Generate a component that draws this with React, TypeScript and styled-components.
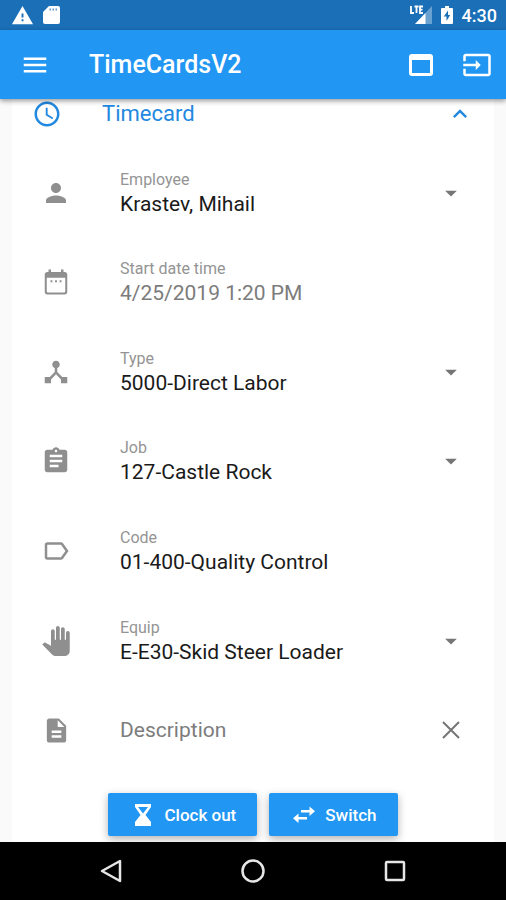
import React, { useId, useState } from "react";
import styled, { createGlobalStyle } from "styled-components";
import {
  MdMenu, MdInput, MdSchedule, MdExpandLess, MdPerson, MdDeviceHub,
  MdAssignment, MdLabelOutline, MdPanTool, MdDescription, MdWarning, MdArrowDropDown,
} from "react-icons/md";

const GlobalStyle = createGlobalStyle`
  *, *::before, *::after { box-sizing: border-box; }
  body {
    margin: 0;
    background: #fafafa;
    font-family: Roboto, "Liberation Sans", sans-serif;
  }
  button, input, select { font: inherit; color: inherit; }
`;

const Screen = styled.div`
  display: flex;
  flex-direction: column;
  min-height: 100vh;
`;

const StatusBar = styled.div`
  display: flex;
  align-items: center;
  justify-content: space-between;
  height: 30px;
  padding: 0 9px 0 11px;
  background: #1a6fb7;
  color: #fff;
  font-size: 18px;
  font-weight: 500;
`;

const StatusGroup = styled.div`
  display: flex;
  align-items: center;
  gap: 9px;
`;

const AppBar = styled.header`
  position: relative;
  z-index: 1;
  display: flex;
  align-items: center;
  height: 69px;
  padding: 0 14px 0 20px;
  background: #2196f3;
  color: #fff;
  box-shadow: 0 2px 5px rgba(0, 0, 0, 0.4);
`;

const IconButton = styled.button`
  display: grid;
  place-items: center;
  padding: 0;
  border: 0;
  background: none;
  color: inherit;
  cursor: pointer;
`;

const Title = styled.h1`
  flex: 1;
  margin: 0 0 0 39px;
  font-size: 25px;
  font-weight: 500;
`;

const BarActions = styled.div`
  display: flex;
  align-items: center;
  gap: 29px;
`;

const Card = styled.main`
  flex: 1;
  display: flex;
  flex-direction: column;
  margin: 0 12px;
  background: #fff;
`;

const SectionHeader = styled.button`
  display: flex;
  align-items: center;
  height: 49px;
  padding: 0 20px 19px;
  border: 0;
  background: none;
  color: #2389e0;
  text-align: left;
  cursor: pointer;
`;

const SectionTitle = styled.span`
  flex: 1;
  margin-left: 40px;
  font-size: 22px;
  line-height: 30px;
`;

const Form = styled.form`
  flex: 1;
  display: flex;
  flex-direction: column;
`;

const Fields = styled.div`
  flex: 1;
  display: grid;
  grid-auto-rows: minmax(64px, 1fr);
`;

const FieldRow = styled.div`
  display: flex;
  align-items: center;
  padding: 0 27px 0 29px;
  color: #8f8f8f;
`;

const LeadingIcon = styled.span`
  display: grid;
  place-items: center;
  flex: none;
  width: 30px;
  margin-right: 49px;
`;

const FieldBody = styled.div`
  flex: 1;
  min-width: 0;
  display: grid;
`;

const FieldLabel = styled.label`
  padding-top: 2px;
  font-size: 16px;
  line-height: 20px;
  color: #949494;
`;

const TextInput = styled.input<{ $muted?: boolean }>`
  width: 100%;
  height: 28px;
  padding: 0;
  border: 0;
  outline: 0;
  background: none;
  font-size: 21px;
  color: ${(p) => (p.$muted ? "#7c7c7c" : "#1a1a1a")};
  &::placeholder { color: #7c7c7c; opacity: 1; }
`;

const SelectInput = styled(TextInput).attrs({ as: "select" })`
  appearance: none;
  cursor: pointer;
`;

const TrailingIcon = styled.span`
  display: grid;
  place-items: center;
  flex: none;
  width: 32px;
  color: #757575;
`;

const Actions = styled.div`
  display: flex;
  justify-content: center;
  gap: 12px;
  padding: 18px 0 6px;
`;

const ActionButton = styled.button`
  display: flex;
  align-items: center;
  gap: 10px;
  height: 43px;
  padding: 0 21px 0 24px;
  border: 0;
  border-radius: 2px;
  background: #2196f3;
  color: #fff;
  font-size: 17px;
  font-weight: 500;
  box-shadow: 0 3px 8px rgba(0, 0, 0, 0.3);
  cursor: pointer;
`;

const NavBar = styled.nav`
  position: relative;
  display: flex;
  align-items: center;
  justify-content: space-around;
  height: 58px;
  padding: 0 40px;
  background: #000;
  color: #e6e6e6;
`;

const SdCardIcon = () => (
  <svg width="17" height="20" viewBox="0 0 17 20" aria-hidden="true">
    <path d="M6 1h9q2 0 2 2v14q0 2-2 2H2q-2 0-2-2V7z" fill="#fff" />
    <path d="M6.500 3.500h1.500v2H6.500zM9.500 3.500H11v2H9.500zM12.500 3.500H14v2h-1.500z" fill="#1a6fb7" opacity=".7" />
  </svg>
);

const SignalIcon = () => (
  <svg width="22" height="20" viewBox="0 0 22 20" aria-hidden="true">
    <path d="M22 1v18H5z" fill="#fff" opacity=".35" />
    <path d="M15.500 7.900V19H5z" fill="#fff" />
    <path d="M1 1v7h3M4.500 1.500h4M6.500 1.500V8M13 1.500h-3V8h3M10 4.600h2.500" fill="none" stroke="#fff" strokeWidth="1.800" />
  </svg>
);

const BatteryIcon = () => (
  <svg width="12" height="18" viewBox="0 0 12 18" aria-hidden="true">
    <path d="M4 0h4v2h3q1 0 1 1v14q0 1-1 1H1q-1 0-1-1V3q0-1 1-1h3z" fill="#fff" />
    <path d="M7 4.500L2.800 10.500H5.500V15L9.200 9H7z" fill="#1a6fb7" />
  </svg>
);

const WindowIcon = () => (
  <svg width="24" height="22" viewBox="0 0 24 22" aria-hidden="true">
    <path fill="currentColor" fillRule="evenodd" d="M3 0h18q3 0 3 3v16q0 3-3 3H3q-3 0-3-3V3q0-3 3-3zM3 6v13h18V6z" />
  </svg>
);

const CalendarIcon = () => (
  <svg width="30" height="30" viewBox="0 0 24 24" fill="currentColor" aria-hidden="true">
    <path d="M19 4h-1V2h-2v2H8V2H6v2H5c-1.100 0-2 .9-2 2v14c0 1.100.9 2 2 2h14c1.100 0 2-.9 2-2V6c0-1.100-.9-2-2-2zm.4 15.400q0 1-1 1H5.600q-1 0-1-1V8.600h14.800z" />
    <path d="M7.600 10.600h1.500v1.500H7.600zM11.250 10.600h1.500v1.500h-1.500zM14.900 10.600h1.500v1.500h-1.500z" />
  </svg>
);

const CloseIcon = () => (
  <svg width="18" height="18" viewBox="0 0 18 18" aria-hidden="true">
    <path d="M1 1l16 16M17 1L1 17" stroke="currentColor" strokeWidth="2" />
  </svg>
);

const HourglassIcon = () => (
  <svg width="22" height="22" viewBox="-2 0 22 22" aria-hidden="true">
    <path fill="#fff" fillRule="evenodd" d="M1 0h16v3l-5.500 8L17 18v4H1v-4l5.500-7L1 3zM4 3l5 6.500L14 3z" />
  </svg>
);

const SwapIcon = () => (
  <svg width="22" height="18" viewBox="0 0 22 18" aria-hidden="true">
    <path fill="#fff" d="M8 4h8.500V0.500L22 5.300l-5.500 4.700V6.500H8zM14 11H5.500V7.500L0 12.300 5.500 17v-3.500H14z" />
  </svg>
);

type FieldProps = {
  label: string;
  value: string;
  icon: React.ReactNode;
  kind?: "select" | "text";
  muted?: boolean;
};

function Field({ label, value, icon, kind = "text", muted }: FieldProps) {
  const id = useId();
  return (
    <FieldRow>
      <LeadingIcon>{icon}</LeadingIcon>
      <FieldBody>
        <FieldLabel htmlFor={id}>{label}</FieldLabel>
        {kind === "select" ? (
          <SelectInput id={id}>
            <option>{value}</option>
          </SelectInput>
        ) : (
          <TextInput id={id} defaultValue={value} readOnly={muted} $muted={muted} />
        )}
      </FieldBody>
      {kind === "select" && (
        <TrailingIcon><MdArrowDropDown size={28} /></TrailingIcon>
      )}
    </FieldRow>
  );
}

export default function App() {
  const [description, setDescription] = useState("");
  return (
    <>
      <GlobalStyle />
      <Screen>
        <StatusBar>
          <StatusGroup>
            <MdWarning size={23} />
            <SdCardIcon />
          </StatusGroup>
          <StatusGroup>
            <SignalIcon />
            <BatteryIcon />
            <span>4:30</span>
          </StatusGroup>
        </StatusBar>
        <AppBar>
          <IconButton aria-label="Menu"><MdMenu size={30} /></IconButton>
          <Title>TimeCardsV2</Title>
          <BarActions>
            <IconButton aria-label="Window"><WindowIcon /></IconButton>
            <IconButton aria-label="Sign out"><MdInput size={30} /></IconButton>
          </BarActions>
        </AppBar>
        <Card>
          <SectionHeader type="button" aria-expanded="true">
            <MdSchedule size={30} />
            <SectionTitle>Timecard</SectionTitle>
            <MdExpandLess size={28} />
          </SectionHeader>
          <Form onSubmit={(e) => e.preventDefault()}>
            <Fields>
              <Field label="Employee" value="Krastev, Mihail" kind="select" icon={<MdPerson size={30} />} />
              <Field label="Start date time" value="4/25/2019 1:20 PM" muted icon={<CalendarIcon />} />
              <Field label="Type" value="5000-Direct Labor" kind="select" icon={<MdDeviceHub size={30} />} />
              <Field label="Job" value="127-Castle Rock" kind="select" icon={<MdAssignment size={30} />} />
              <Field label="Code" value="01-400-Quality Control" icon={<MdLabelOutline size={30} />} />
              <Field label="Equip" value="E-E30-Skid Steer Loader" kind="select" icon={<MdPanTool size={30} />} />
              <FieldRow>
                <LeadingIcon><MdDescription size={29} /></LeadingIcon>
                <FieldBody>
                  <TextInput
                    aria-label="Description"
                    placeholder="Description"
                    value={description}
                    onChange={(e) => setDescription(e.target.value)}
                  />
                </FieldBody>
                <TrailingIcon>
                  <IconButton type="button" aria-label="Clear description" onClick={() => setDescription("")}>
                    <CloseIcon />
                  </IconButton>
                </TrailingIcon>
              </FieldRow>
            </Fields>
            <Actions>
              <ActionButton type="submit"><HourglassIcon />Clock out</ActionButton>
              <ActionButton type="button"><SwapIcon />Switch</ActionButton>
            </Actions>
          </Form>
        </Card>
        <NavBar aria-label="System">
          <IconButton aria-label="Back">
            <svg width="24" height="24" viewBox="0 0 24 24">
              <path d="M21 2v20L3 12z" fill="none" stroke="currentColor" strokeWidth="2.500" strokeLinejoin="round" />
            </svg>
          </IconButton>
          <IconButton aria-label="Home">
            <svg width="24" height="24" viewBox="0 0 24 24">
              <circle cx="12" cy="12" r="10.500" fill="none" stroke="currentColor" strokeWidth="2.500" />
            </svg>
          </IconButton>
          <IconButton aria-label="Recent apps">
            <svg width="24" height="24" viewBox="0 0 24 24">
              <rect x="3" y="3" width="18" height="18" rx="1" fill="none" stroke="currentColor" strokeWidth="2.500" />
            </svg>
          </IconButton>
        </NavBar>
      </Screen>
    </>
  );
}
